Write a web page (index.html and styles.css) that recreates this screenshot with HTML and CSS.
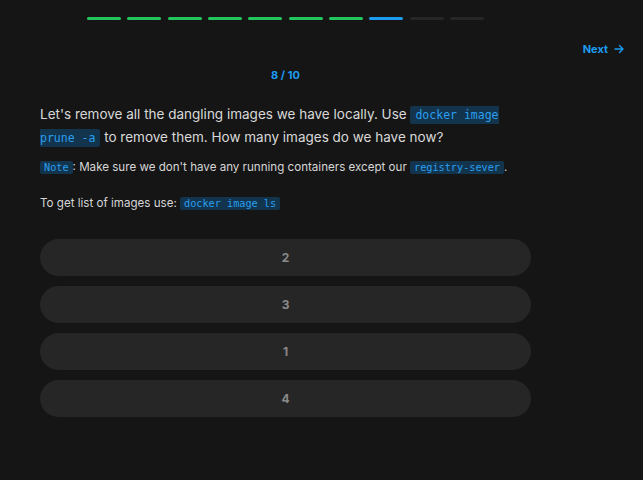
FILE: index.html
```html
<!DOCTYPE html>
<html>
<head>
<meta charset="utf-8">
<link rel="stylesheet" href="styles.css">
</head>
<body>
<div class="column">
  <div class="progress">
    <span class="seg done"></span><span class="seg done"></span><span class="seg done"></span><span class="seg done"></span><span class="seg done"></span><span class="seg done"></span><span class="seg done"></span><span class="seg current"></span><span class="seg"></span><span class="seg"></span>
  </div>
</div>
<div class="nav">
  <a class="next" href="#">Next
    <svg width="10" height="10" viewBox="0 0 10 10" fill="none" stroke="currentColor" stroke-width="1.4" stroke-linecap="round" stroke-linejoin="round"><path d="M1 5h8M5.5 1.5L9 5l-3.5 3.5"/></svg>
  </a>
</div>
<div class="column content">
  <div class="counter">8 / 10</div>
  <p class="question">Let's remove all the dangling images we have locally. Use <code>docker image prune -a</code> to remove them. How many images do we have now?</p>
  <p class="small"><code>Note</code>: Make sure we don't have any running containers except our <code>registry-sever</code>.</p>
  <p class="small tip">To get list of images use: <code>docker image ls</code></p>
  <div class="options">
    <button class="option">2</button>
    <button class="option">3</button>
    <button class="option">1</button>
    <button class="option">4</button>
  </div>
</div>
</body>
</html>
```
FILE: styles.css
```css
html, body {
  margin: 0;
  padding: 0;
  background: #151515;
  font-family: Inter, "Noto Sans", sans-serif;
  color: #d6d6d6;
}
.column {
  width: 491px;
  margin-left: 40px;
}
.progress {
  display: flex;
  justify-content: center;
  gap: 6.4px;
  padding-top: 17px;
}
.seg {
  width: 34px;
  height: 3px;
  border-radius: 2px;
  background: #262626;
}
.seg.done { background: #22c55e; }
.seg.current { background: #1d9bf0; }
.nav {
  display: flex;
  justify-content: flex-end;
  padding: 22px 19px 0 0;
}
.next {
  display: flex;
  align-items: center;
  gap: 6px;
  color: #1d9bf0;
  font-size: 11px;
  font-weight: 700;
  text-decoration: none;
  line-height: 14px;
}
.counter {
  text-align: center;
  color: #1d9bf0;
  font-size: 11px;
  font-weight: 700;
  line-height: 14px;
  margin-top: 12px;
}
.question {
  font-size: 13.5px;
  line-height: 22px;
  margin: 21px 0 0;
  color: #d9d9d9;
}
code {
  font-family: "DejaVu Sans Mono", "Liberation Mono", monospace;
  font-size: 11.5px;
  color: #2b9ff0;
  background: #12344d;
  padding: 2px 5px;
  border-radius: 2px;
}
.small {
  font-size: 11.6px;
  line-height: 18px;
  margin: 9px 0 0;
  color: #d6d6d6;
}
.small code {
  font-size: 10.2px;
  padding: 1px 4px;
}
.tip { margin-top: 17px; }
.options {
  display: flex;
  flex-direction: column;
  gap: 10px;
  margin-top: 26px;
}
.option {
  height: 37px;
  border: none;
  border-radius: 19px;
  background: #262626;
  color: #8a8a8a;
  font-family: Inter, "Noto Sans", sans-serif;
  font-size: 12px;
  font-weight: 700;
  padding: 0;
}
```
